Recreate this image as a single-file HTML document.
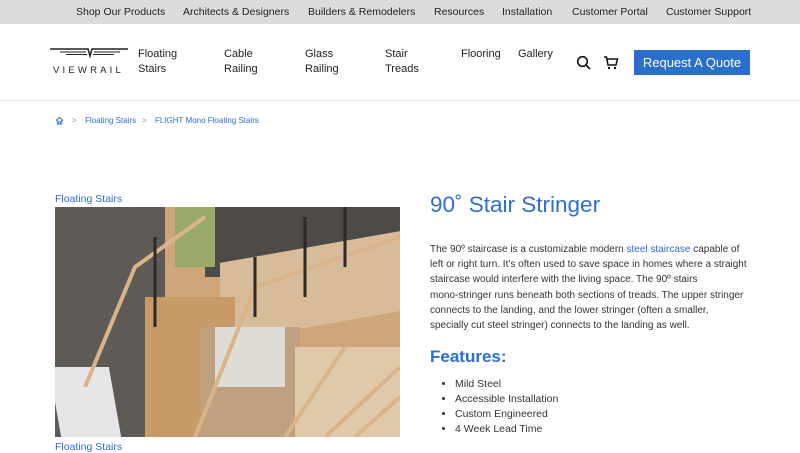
<!DOCTYPE html>
<html><head><meta charset="utf-8"><style>
*{margin:0;padding:0;box-sizing:border-box}
body{width:800px;height:450px;overflow:hidden;background:#fff;font-family:"Liberation Sans",Arial,sans-serif;color:#222;position:relative}
.top{position:absolute;left:0;top:0;width:800px;height:24px;background:#dcdcdc;font-size:10.5px}
.top span{position:absolute;top:6px;color:#222}
.nav{position:absolute;font-size:11px;line-height:15px;color:#222;top:47px}
.hr{position:absolute;left:0;top:100px;width:800px;height:1px;background:#e4e4e4}
.bc{position:absolute;top:116px;font-size:8px;color:#2d6fcc}
.btn{position:absolute;left:634px;top:50px;width:116px;height:25px;background:#2b6fcc;color:#fff;font-size:13px;text-align:center;line-height:25px}
.blue{color:#2d6fcc}
h1{position:absolute;left:430px;top:192px;font-weight:normal;font-size:22.5px;color:#2d6fcc}
.p{position:absolute;left:430px;top:242px;width:320px;font-size:10px;line-height:15.2px;color:#333}
h2{position:absolute;left:430px;top:347px;font-size:17px;color:#2d6fcc}
ul{position:absolute;left:455px;top:377px;font-size:10.5px;line-height:15px;color:#333}
.img{position:absolute;left:55px;top:207px;width:345px;height:230px;overflow:hidden;background:#cfa57a}
</style></head><body>
<div class="top">
<span style="left:76px">Shop Our Products</span><span style="left:183px">Architects &amp; Designers</span><span style="left:308px">Builders &amp; Remodelers</span><span style="left:434px">Resources</span><span style="left:502px">Installation</span><span style="left:572px">Customer Portal</span><span style="left:666px">Customer Support</span>
</div>
<svg style="position:absolute;left:50px;top:46px" width="80" height="30" viewBox="0 0 80 30">
<path d="M0 3H38L40 10L42 3H78" stroke="#222" stroke-width="1.5" fill="none"/>
<path d="M10 6H36M16 8.5H37M44 6H70M43 8.5H64" stroke="#222" stroke-width="1"/>
<text x="3" y="27" font-family="Liberation Sans" font-size="9.5" letter-spacing="3.2" fill="#222">VIEWRAIL</text>
</svg>
<div class="nav" style="left:138px">Floating<br>Stairs</div>
<div class="nav" style="left:224px">Cable<br>Railing</div>
<div class="nav" style="left:305px">Glass<br>Railing</div>
<div class="nav" style="left:385px">Stair<br>Treads</div>
<div class="nav" style="left:461px">Flooring</div>
<div class="nav" style="left:518px">Gallery</div>
<svg style="position:absolute;left:576px;top:55px" width="16" height="16" viewBox="0 0 16 16"><circle cx="6.5" cy="6.5" r="4.8" stroke="#111" stroke-width="1.6" fill="none"/><path d="M10 10L14 14" stroke="#111" stroke-width="1.8"/></svg>
<svg style="position:absolute;left:603px;top:55px" width="16" height="16" viewBox="0 0 16 16"><path d="M1 2H3.5L5 10H13L14.5 4H4" stroke="#111" stroke-width="1.5" fill="none"/><circle cx="6" cy="13" r="1.2" fill="#111"/><circle cx="12" cy="13" r="1.2" fill="#111"/></svg>
<div class="btn">Request A Quote</div>
<div class="hr"></div>
<svg style="position:absolute;left:55px;top:116px" width="9" height="9" viewBox="0 0 10 10"><path d="M1 5L5 1.5L9 5M2.5 4V9H7.5V4M4 9V6.5H6V9" stroke="#2d6fcc" fill="none" stroke-width="1"/></svg>
<span class="bc" style="left:72px;color:#888">&gt;</span>
<span class="bc" style="left:85px">Floating Stairs</span>
<span class="bc" style="left:142px;color:#888">&gt;</span>
<span class="bc" style="left:155px">FLIGHT Mono Floating Stairs</span>
<div style="position:absolute;left:55px;top:193px;font-size:10.5px" class="blue">Floating Stairs</div>
<div class="img">
<div style="position:absolute;left:0;top:0;width:110px;height:230px;background:#5e5a56"></div>
<div style="position:absolute;left:0;top:160px;width:60px;height:70px;background:#e6e6e8;transform:skewX(10deg)"></div>
<div style="position:absolute;left:150px;top:0;width:195px;height:70px;background:#4e4a48"></div>
<div style="position:absolute;left:120px;top:0;width:40px;height:60px;background:#9aa86a"></div>
<div style="position:absolute;left:165px;top:40px;width:180px;height:80px;background:#d8bb98;transform:skewY(-10deg)"></div>
<div style="position:absolute;left:90px;top:90px;width:90px;height:140px;background:#c89a68"></div>
<div style="position:absolute;left:145px;top:120px;width:100px;height:110px;background:#bfa080"></div>
<div style="position:absolute;left:160px;top:120px;width:70px;height:60px;background:#dedcd4"></div>
<div style="position:absolute;left:240px;top:140px;width:105px;height:90px;background:#e0c8aa"></div>
<svg style="position:absolute;left:0;top:0" width="345" height="230"><path d="M30 180L80 60L150 10M140 230L200 80L345 30M230 230L290 140M270 230L345 160M300 230L345 190" stroke="#d9b48a" stroke-width="4" fill="none"/><path d="M100 30V120M200 50V110M250 10V90M290 0V60" stroke="#2a2a2a" stroke-width="3"/></svg>
</div>
<div style="position:absolute;left:55px;top:441px;font-size:10.5px" class="blue">Floating Stairs</div>
<h1>90˚ Stair Stringer</h1>
<div class="p">The 90º staircase is a customizable modern <span class="blue">steel staircase</span> capable of left or right turn. It’s often used to save space in homes where a straight staircase would interfere with the living space. The 90º stairs mono&#8209;stringer runs beneath both sections of treads. The upper stringer connects to the landing, and the lower stringer (often a smaller,<br>specially cut steel stringer) connects to the landing as well.</div>
<h2>Features:</h2>
<ul><li>Mild Steel</li><li>Accessible Installation</li><li>Custom Engineered</li><li>4 Week Lead Time</li></ul>
</body></html>
